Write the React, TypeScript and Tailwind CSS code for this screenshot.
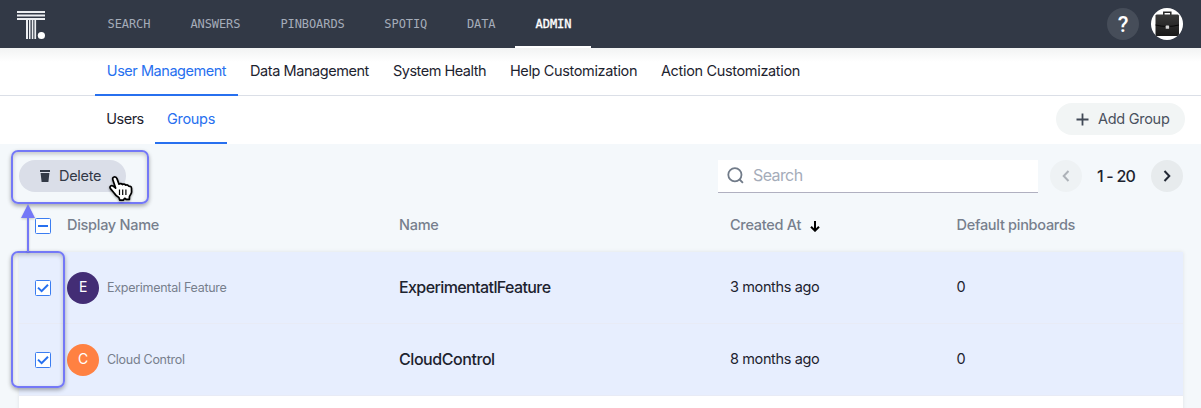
import React from "react";

const navItems = [
  { label: "SEARCH", width: "w-[82.9px]" },
  { label: "ANSWERS", width: "w-[90px]" },
  { label: "PINBOARDS", width: "w-[104.3px]" },
  { label: "SPOTIQ", width: "w-[82.2px]" },
  { label: "DATA", width: "w-[68.6px]" },
  { label: "ADMIN", width: "w-[76px]", active: true },
];

const sections = [
  { label: "User Management", width: "w-[143px]", tracking: "tracking-[-0.46px]", active: true },
  { label: "Data Management", width: "w-[143px]", tracking: "tracking-[-0.44px]" },
  { label: "System Health", width: "w-[117px]", tracking: "tracking-[-0.5px]" },
  { label: "Help Customization", width: "w-[151px]", tracking: "tracking-[-0.36px]" },
  { label: "Action Customization", width: "w-[163px]", tracking: "tracking-[-0.34px]" },
];

const rows = [
  { initial: "E", color: "bg-[#432d75]", display: "Experimental Feature", name: "ExperimentatlFeature", tracking: "tracking-[-0.6px]", created: "3 months ago" },
  { initial: "C", color: "bg-[#ff8142]", display: "Cloud Control", name: "CloudControl", tracking: "tracking-[-0.44px]", created: "8 months ago" },
];

const columns = "grid grid-cols-[48px_332px_331px_226.5px_1fr] items-center";

function Logo() {
  return (
    <svg width="30" height="30" viewBox="0 0 30 30" fill="#eceef1" aria-hidden="true">
      <path d="M1 0h28v2H1zM1 3.5h28v2H1zM1 7h28v2H1zM10 8h2v20h-2zM13 8h1.5v20H13zM15.8 8h1.500v20h-1.500zM18.400 8h1.700v20h-1.700z" />
      <circle cx="25.400" cy="24.500" r="3.600" fill="white" />
    </svg>
  );
}

function Briefcase() {
  return (
    <svg width="32" height="32" viewBox="0 0 32 32" className="rounded-full" aria-hidden="true">
      <defs>
        <linearGradient id="case" x1="0" y1="0" x2="0" y2="1">
          <stop stopColor="#3a3a3a" />
          <stop offset="1" stopColor="#191919" />
        </linearGradient>
      </defs>
      <rect width="32" height="32" fill="white" />
      <path d="M12.800 7V4.200h7V7" fill="none" stroke="#252525" strokeWidth="1.500" />
      <path d="M4.500 7.500 5.500 6.500h21.500l1 1v20.500H4.500z" fill="url(#case)" />
      <path d="M4.500 17c8 2 15.500 2 23.500 0" fill="none" stroke="#080808" />
      <rect x="14.700" y="17.600" width="3.400" height="3.200" rx=".6" fill="#d5d5d5" />
    </svg>
  );
}

function CheckBox({ partial = false }: { partial?: boolean }) {
  return (
    <svg width="16" height="16" viewBox="0 0 16 16" fill="none" stroke="#2770ef" aria-hidden="true">
      <rect x=".5" y=".5" width="15" height="15" rx="1" fill="white" stroke="#3b7df1" />
      <path d={partial ? "M3 8h10" : "M3 7.600 6.600 11.100 13 4.700"} strokeWidth={2} />
    </svg>
  );
}

function Pointer() {
  return (
    <svg width="26" height="28" viewBox="0 0 26 28" className="absolute left-[108px] top-[175px] drop-shadow-[0_1px_1px_#00000066]" aria-hidden="true">
      <path
        d="M4.900 4.900C4.400 3.300 5 2.200 6.100 2c1.400-.2 2.500.5 3 1.900l1.900 5.300c.9-.8 2.600-.7 3.400.3 1-.7 2.600-.4 3.200.700 1.200-.5 2.500-.1 3.100.9l1.400.2c.8.2 1.300.9 1.400 1.800l.1 3.900c0 1.900-1.900 3.300-2.200 4.800v2.500h-3.300l-1.400-1-1.500 1.900-3.500-.1-.8-2.500c-2-1.100-3.500-2.600-4.600-4.400l-3.800-4.600c-1.300-1.800.4-3.700 2.400-2.700l2.700 2.200z"
        fill="white"
        stroke="black"
        strokeWidth="1.700"
        strokeLinejoin="round"
      />
      <path d="M11.500 14.500v5.500M14.700 14.500v5.500M17.900 14.500v5.500" stroke="black" strokeWidth="1.200" />
    </svg>
  );
}

export default function App() {
  return (
    <div className="relative h-[408px] w-[1201px] overflow-hidden bg-[#f4f8fb] font-['Inter','Liberation_Sans',sans-serif] text-[14.5px] tracking-[-0.28px] text-[#1d232f]">
      <header className="flex h-12 bg-[#323946] pl-4 pr-[18px]">
        <div className="w-[71.500px] pt-[11px]"><Logo /></div>
        <nav className="flex font-['DejaVu_Sans_Mono',monospace] text-[12px] tracking-[-0.08px] text-[#a5acb9]">
          {navItems.map((item) => (
            <a key={item.label} className={`${item.width} flex justify-center border-b-2 pt-px leading-[46px] ${item.active ? "border-white text-white [-webkit-text-stroke:0.35px]" : "border-transparent"}`}>
              {item.label}
            </a>
          ))}
        </nav>
        <div className="ml-auto flex items-center gap-3">
          <span className="flex size-8 items-center justify-center rounded-full bg-[#464d59] pt-px font-['Roboto',sans-serif] text-[22px] font-medium text-white">?</span>
          <Briefcase />
        </div>
      </header>

      <nav className="flex h-12 border-b border-[#dbdfe7] bg-[linear-gradient(#f2f3f3,white_14px)] pl-[95px]">
        {sections.map((item) => (
          <a key={item.label} className={`${item.width} ${item.tracking} -mb-px flex justify-center whitespace-nowrap border-b-2 leading-[46px] ${item.active ? "border-[#2770ef] text-[#2770ef]" : "border-transparent"}`}>
            {item.label}
          </a>
        ))}
      </nav>

      <div className="flex h-12 items-center bg-white pl-[95px] pr-4">
        <a className="flex h-12 w-[60px] justify-center leading-[46px] tracking-[-0.5px]">Users</a>
        <a className="flex h-12 w-[72px] justify-center border-b-2 border-[#2770ef] leading-[46px] text-[#2770ef]">Groups</a>
        <button className="-mt-0.5 ml-auto flex h-8 w-[129px] items-center rounded-full bg-[#f2f5f5] pl-5 text-[#4a515e]">
          <svg width="13" height="13" viewBox="0 0 13 13" className="mr-[9px] mt-px" stroke="#414956" strokeWidth="1.800"><path d="M6.500.5v12M.5 6.500h12" /></svg>
          <span className="-mt-px">Add Group</span>
        </button>
      </div>

      <div className="flex h-16 items-center pl-[19px] pr-[18px]">
        <button className="flex h-8 w-[107px] items-center rounded-full bg-[#dadee8] pl-[21px] text-[#323946]">
          <svg width="10" height="12" viewBox="0 0 10 12" fill="#323946" className="mr-[9px]"><path d="M0 0h10v2H0zM.6 3h8.800l-1 9H1.600z" /></svg>
          <span className="-mt-px">Delete</span>
        </button>
        <label className="ml-auto flex h-[33px] w-80 items-center border-b border-[#b0b0c0] bg-white pl-[9px] text-[16px] tracking-[-0.6px] text-[#a5acb9]">
          <svg width="17" height="17" viewBox="0 0 17 17" fill="none" stroke="#717b89" strokeWidth="1.800" className="mr-[9px]"><circle cx="7.900" cy="7.700" r="6.600" /><path d="m12.600 12.500 3.300 3.300" /></svg>
          <span className="-mt-px">Search</span>
        </label>
        <span className="ml-3 flex size-8 items-center justify-center rounded-full bg-[#eef2f4]">
          <svg width="8" height="12" viewBox="0 0 8 12" fill="none" stroke="#adb2b8" strokeWidth="2"><path d="M6.500 1 1.700 6l4.800 5" /></svg>
        </span>
        <span className="w-[69px] pb-px pr-px text-center text-[16px] font-medium tracking-[-0.8px]">1 - 20</span>
        <span className="flex size-8 items-center justify-center rounded-full bg-[#e7ebed]">
          <svg width="8" height="12" viewBox="0 0 8 12" fill="none" stroke="#222834" strokeWidth="2"><path d="m1.500 1 4.800 5-4.800 5" /></svg>
        </span>
      </div>

      <section className="ml-[19px] w-[1164px]">
        <div className={`${columns} h-11 pb-2 font-medium text-[#777f8d]`}>
          <span className="pl-4"><CheckBox partial /></span>
          <span className="pb-0.5">Display Name</span>
          <span className="pb-0.5">Name</span>
          <span className="flex items-center pb-0.5">
            Created At
            <svg width="10" height="11" viewBox="0 0 10 11" className="ml-[9px] mt-0.5" fill="none" stroke="black" strokeWidth="2"><path d="M5 0v9.500M1 5.700l4 4 4-4" /></svg>
          </span>
          <span className="pb-0.5">Default pinboards</span>
        </div>
        <div className="h-40 bg-white shadow-[0_0_4px_#00000018]">
          {rows.map((row) => (
            <div key={row.name} className={`${columns} h-[72px] border-b border-[#e8ebf6] bg-[#e7eefe]`}>
              <span className="pl-4"><CheckBox /></span>
              <span className="flex items-center gap-2 text-[12.5px] text-[#777f8d]">
                <span className={`${row.color} flex size-8 items-center justify-center rounded-full pb-0.5 text-[14px] text-white`}>{row.initial}</span>
                <span className="pt-px">{row.display}</span>
              </span>
              <span className={`${row.tracking} pb-0.5 text-[16px] font-medium`}>{row.name}</span>
              <span className="pb-0.5 tracking-[-0.38px]">{row.created}</span>
              <span className="pb-0.5">0</span>
            </div>
          ))}
        </div>
      </section>

      <div className="absolute left-[11px] top-[150px] h-[54px] w-[138px] rounded-[7px] border-2 border-[#7478f7] shadow-[0_2px_4px_#00000055,inset_0_2px_4px_#00000033]" />
      <div className="absolute left-[11px] top-[251px] h-[137px] w-[54px] rounded-[7px] border-2 border-[#7478f7] shadow-[0_2px_4px_#00000055,inset_0_2px_4px_#00000033]" />
      <svg width="16" height="48" viewBox="0 0 16 48" className="absolute left-5 top-[204px] drop-shadow-[0_1px_1px_#00000033]" fill="#7478f7"><path d="m8 0 7 14H9v34H7V14H1z" /></svg>
      <Pointer />
    </div>
  );
}
